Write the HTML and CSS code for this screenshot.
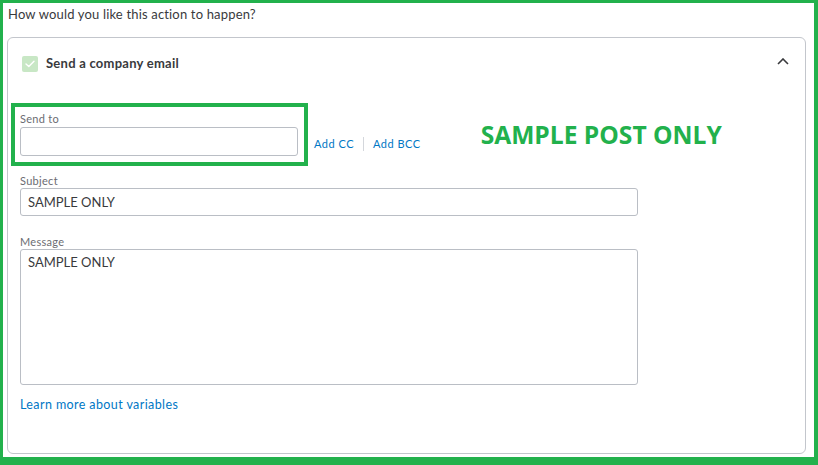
FILE: index.html
```html
<!DOCTYPE html>
<html lang="en">
<head>
<meta charset="utf-8">
<title>Send a company email</title>
<link rel="stylesheet" href="styles.css">
</head>
<body>
<div class="frame">
  <div class="question">How would you like this action to happen?</div>
  <div class="card">
    <div class="card-header">
      <span class="checkbox">
        <svg width="10" height="8" viewBox="0 0 10 8"><path d="M1 4 L3.8 6.6 L9 1.2" fill="none" stroke="#ffffff" stroke-width="1.4" stroke-linecap="round" stroke-linejoin="round"/></svg>
      </span>
      <span class="card-title">Send a company email</span>
      <svg class="chevron" width="12" height="7" viewBox="0 0 12 7"><path d="M1 6 L6 1 L11 6" fill="none" stroke="#393a3d" stroke-width="1.6"/></svg>
    </div>
    <div class="sendto-row">
      <div class="highlight">
        <div class="label">Send to</div>
        <div class="input input-sendto"></div>
      </div>
      <div class="cc-links">
        <a class="link">Add CC</a>
        <span class="sep"></span>
        <a class="link">Add BCC</a>
      </div>
      <div class="sample-note">SAMPLE POST ONLY</div>
    </div>
    <div class="fields">
      <div class="label label-subject">Subject</div>
      <div class="input input-wide">SAMPLE ONLY</div>
      <div class="label label-message">Message</div>
      <div class="textarea">SAMPLE ONLY</div>
      <a class="learn">Learn more about variables</a>
    </div>
  </div>
</div>
</body>
</html>
```
FILE: styles.css
```css
* { box-sizing: border-box; }
html, body { margin: 0; padding: 0; background: #ffffff; }
body {
  font-family: Lato, "Noto Sans", "Liberation Sans", sans-serif;
  color: #393a3d;
}
.frame {
  width: 818px;
  height: 465px;
  border-style: solid;
  border-color: #22b14c;
  border-width: 3px 4px 8px 3px;
  display: flex;
  flex-direction: column;
}
.question {
  font-size: 13px;
  line-height: 16px;
  letter-spacing: 0.17px;
  padding: 3px 0 0 5px;
  margin-bottom: 15px;
}
.card {
  flex: 1;
  margin: 0 8px 3px 4px;
  border: 1px solid #c3c6cc;
  border-radius: 6px;
}
.card-header {
  display: flex;
  align-items: flex-start;
  padding: 18px 16px 0 14px;
  height: 65px;
}
.checkbox {
  width: 16px;
  height: 16px;
  border-radius: 2px;
  background: #c8e7c5;
  display: flex;
  align-items: center;
  justify-content: center;
  margin-right: 8px;
}
.card-title {
  font-size: 13px;
  line-height: 16px;
  font-weight: 700;
  letter-spacing: 0.25px;
  margin-top: -1px;
}
.chevron { margin-left: auto; margin-top: 2px; }
.sendto-row {
  display: flex;
  align-items: flex-start;
  padding-left: 3px;
}
.highlight {
  border: 4px solid #22b14c;
  padding: 5px 6px 6px 5px;
  width: 297px;
}
.label {
  font-size: 11px;
  line-height: 14px;
  letter-spacing: 0.3px;
  color: #6b6c72;
}
.label + .input { margin-top: 1px; }
.input {
  border: 1px solid #babec5;
  border-radius: 3px;
  height: 29px;
  font-size: 13px;
  line-height: 16px;
  padding: 5px 7px;
  color: #393a3d;
}
.input-sendto { width: 278px; }
.cc-links {
  display: flex;
  align-items: center;
  margin: 34px 0 0 6px;
  height: 14px;
}
.link {
  font-size: 11px;
  line-height: 14px;
  letter-spacing: 0.5px;
  color: #0077c5;
}
.sep {
  width: 1px;
  height: 14px;
  background: #d4d7dc;
  margin: 0 9px;
}
.sample-note {
  font-family: "Open Sans", "Liberation Sans", sans-serif;
  font-weight: 700;
  font-size: 24.6px;
  line-height: 30px;
  color: #22b14c;
  margin: 17px 0 0 60px;
}
.fields {
  padding-left: 12px;
  display: flex;
  flex-direction: column;
  align-items: flex-start;
}
.label-subject { margin-top: 8px; }
.label-subject + .input { margin-top: 0; }
.input-wide { width: 618px; height: 28px; }
.label-message { margin-top: 19px; }
.textarea {
  width: 618px;
  height: 136px;
  border: 1px solid #babec5;
  border-radius: 3px;
  font-size: 13px;
  line-height: 16px;
  padding: 4px 7px;
}
.learn {
  font-size: 12.5px;
  line-height: 16px;
  letter-spacing: 0.4px;
  color: #0077c5;
  margin-top: 12px;
}
```
